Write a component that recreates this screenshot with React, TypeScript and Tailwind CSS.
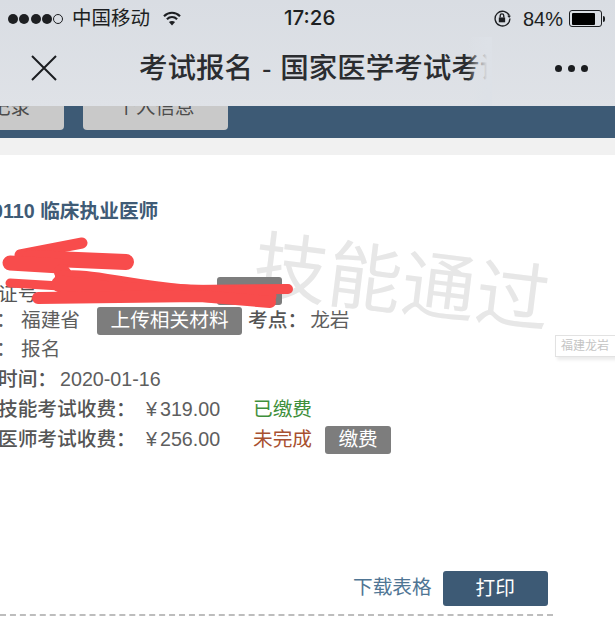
const font = { fontFamily: '"Liberation Sans", "Noto Sans CJK SC", sans-serif' };

const StatusBar = () => (
  <div className="flex h-[37px] items-center pl-[8px] text-[19.5px] text-[#1d1f22]">
    <div className="flex w-[55px] items-center justify-between">
      <span className="h-[10px] w-[10px] rounded-full bg-[#1d1f22]" />
      <span className="h-[10px] w-[10px] rounded-full bg-[#1d1f22]" />
      <span className="h-[10px] w-[10px] rounded-full bg-[#1d1f22]" />
      <span className="h-[10px] w-[10px] rounded-full bg-[#1d1f22]" />
      <span className="h-[10px] w-[10px] rounded-full border border-[#1d1f22]" />
    </div>
    <span className="ml-[9px] w-[78px] whitespace-nowrap">中国移动</span>
    {/* wifi */}
    <svg className="ml-[13px] h-[15px] w-[18px]" viewBox="0 0 18 15" fill="none" stroke="#1d1f22" strokeWidth="2.2">
      <path d="M1 5.2C5.6 .6 12.4 .6 17 5.2" />
      <path d="M3.9 8.2C6.9 5.4 11.1 5.4 14.1 8.2" />
      <path d="M9 14.6L5.9 11.1C7.7 9.6 10.3 9.6 12.1 11.1Z" fill="#1d1f22" stroke="none" />
    </svg>
    <span className="ml-[103px] w-[52px] text-[20.5px] font-medium" style={{ fontFamily: "Inter, sans-serif" }}>
      17:26
    </span>
    <svg className="ml-[157px] h-[19px] w-[19px]" viewBox="0 0 18 18" fill="none" stroke="#1d1f22" strokeWidth="1.3">
      <path d="M15.5 6.5A7 7 0 1 0 16 9" />
      <path d="M13.5 6.5h3.5l-1.7 2z" fill="#1d1f22" stroke="none" />
      <rect x="5.5" y="8" width="6" height="4.6" fill="#1d1f22" stroke="none" />
      <path d="M6.8 8V6.3a1.7 1.7 0 0 1 3.4 0V8" />
    </svg>
    <span className="ml-[11px] w-[40px] text-[20px]">84%</span>
    <div className="ml-[6px] flex items-center">
      <div className="h-[17px] w-[33px] rounded-[3px] border border-[#1d1f22] p-[1.5px]">
        <div className="h-full w-[84%] rounded-[1px] bg-black" />
      </div>
      <span className="ml-[1px] h-[6px] w-[2px] rounded-r-sm bg-[#1d1f22]" />
    </div>
  </div>
);

const NavBar = () => (
  <div className="relative flex h-[69px] items-center pb-[7px]">
    <svg className="ml-[31px] h-[26px] w-[26px]" viewBox="0 0 26 26" stroke="#1b1d20" strokeWidth="2" fill="none">
      <path d="M1 1l24 24M25 1L1 25" />
    </svg>
    <div className="ml-[82px] w-[352px] overflow-hidden whitespace-nowrap text-[28.5px] font-medium leading-none text-[#2b2d30] [word-spacing:1px]">
      考试报名 - 国家医学考试考试
    </div>
    <div className="absolute left-[468px] top-0 h-full w-[24px] bg-gradient-to-r from-transparent to-[#dde1e7] to-80%" />
    <div className="ml-[64px] flex gap-[6px]">
      <span className="h-[7px] w-[7px] rounded-full bg-[#1b1d20]" />
      <span className="h-[7px] w-[7px] rounded-full bg-[#1b1d20]" />
      <span className="h-[7px] w-[7px] rounded-full bg-[#1b1d20]" />
    </div>
  </div>
);

const Tabs = () => (
  <div className="flex h-[32px] items-start gap-[19px] bg-[#3d5a75]">
    <div className="-ml-[40px] flex h-[24px] w-[104px] items-start justify-end overflow-hidden rounded-b-[4px] bg-[#c9c9c9] pr-[34px] text-[19.5px] leading-[9px] text-[#4c4c4c]">
      <span className="-mt-[3px]">记录</span>
    </div>
    <div className="flex h-[24px] w-[145px] justify-center overflow-hidden rounded-b-[4px] bg-[#c9c9c9] text-[19.5px] leading-[9px] text-[#4c4c4c]">
      <span className="-mt-[3px]">个人信息</span>
    </div>
  </div>
);

const Row = ({ className = "h-[30px]", children }: { className?: string; children: React.ReactNode }) => (
  <div className={`flex items-center whitespace-nowrap text-[19.7px] text-[#5e5e5e] ${className}`}>{children}</div>
);

const GrayBtn = ({ className, children }: { className: string; children: React.ReactNode }) => (
  <span className={`flex h-[28px] items-center justify-center rounded-[3px] bg-[#7d7d7d] text-[19.7px] text-white ${className}`}>
    {children}
  </span>
);

const Price = ({ value }: { value: string }) => (
  <span className="w-[109px] pl-[2px]">
    ¥<span className="ml-[3px]">{value}</span>
  </span>
);

const App = () => (
  <div className="relative h-[630px] w-[615px] overflow-hidden bg-white" style={font}>
    <div className="bg-gradient-to-b from-[#d9dde3] to-[#dfe2e7]">
      <StatusBar />
      <NavBar />
    </div>
    <Tabs />
    <div className="h-[17px] bg-[#f1f1f1]" />

    <div className="pt-[45px]">
      <div className="-ml-[8px] text-[19.7px] font-bold leading-[22px] text-[#3f5b76]">0110 临床执业医师</div>
      <div className="mt-[84px]">
        <Row className="h-[29px]">
          <span className="-ml-[4px] w-[25px]">：</span>
          <span>福建省</span>
          <GrayBtn className="ml-[17px] w-[145px]">上传相关材料</GrayBtn>
          <span className="ml-[6px] font-medium text-[#555]">考点：</span>
          <span className="ml-[3px]">龙岩</span>
        </Row>
        <Row>
          <span className="-ml-[4px] w-[25px]">：</span>
          <span>报名</span>
        </Row>
        <Row>
          <span className="-ml-[2px] w-[62px] font-medium text-[#555]">时间：</span>
          <span>2020-01-16</span>
        </Row>
        <Row>
          <span className="-ml-[2px] w-[146px] font-medium text-[#555]">技能考试收费：</span>
          <Price value="319.00" />
          <span className="text-[#3f8f3c]">已缴费</span>
        </Row>
        <Row>
          <span className="-ml-[2px] w-[146px] font-medium text-[#555]">医师考试收费：</span>
          <Price value="256.00" />
          <span className="text-[#a8502f]">未完成</span>
          <GrayBtn className="ml-[13px] w-[66px]">缴费</GrayBtn>
        </Row>
      </div>
      <div className="mt-[116px] flex items-center">
        <span className="ml-[353px] -translate-y-[1px] text-[19.7px] text-[#4f7594]">下载表格</span>
        <span className="ml-[11px] flex h-[35px] w-[105px] items-center justify-center rounded-[3px] bg-[#3d5a75] text-[19.7px] text-white">
          打印
        </span>
      </div>
      <div className="mt-[8px] w-[553px] border-t-2 border-dashed border-[#bdbdbd]" />
    </div>

    {/* watermark */}
    <div className="absolute left-[253px] top-[247px] rotate-[7deg] whitespace-nowrap text-[74px] leading-none tracking-[0.5px] text-[#e7e7e7]">
      技能通过
    </div>
    <div className="absolute left-[555px] top-[335px] flex h-[22px] w-[70px] items-center border border-[#e2e2e2] bg-white pl-[5px] text-[12px] text-[#c4c4c4] shadow-[2px_3px_3px_rgba(0,0,0,0.08)]">
      福建龙岩
    </div>

    {/* row hidden behind the scribble */}
    <span className="absolute left-[217px] top-[277px] h-[28px] w-[65px] rounded-[3px] bg-[#7d7d7d]" />
    <span className="absolute -left-[2px] top-[280px] text-[19.7px] text-[#555]">证号</span>
    <svg className="absolute left-0 top-[230px] h-[100px] w-[300px]" viewBox="0 0 300 100" fill="none" stroke="#f84c4c" strokeLinecap="round" strokeLinejoin="round">
      <path d="M20 25L82 13" strokeWidth="11" />
      <path d="M30 28L126 32" strokeWidth="16" />
      <path d="M10 33L60 36" strokeWidth="15" />
      <path d="M10 53L60 56" strokeWidth="9" />
      <path d="M62 42L72 56" strokeWidth="16" />
      <path d="M60 46C90 42 120 54 190 60L288 59" strokeWidth="10" />
      <path d="M60 54L110 60L268 66" strokeWidth="17" />
      <path d="M38 68L200 66L270 72" strokeWidth="12" />
    </svg>
  </div>
);

export default App;
